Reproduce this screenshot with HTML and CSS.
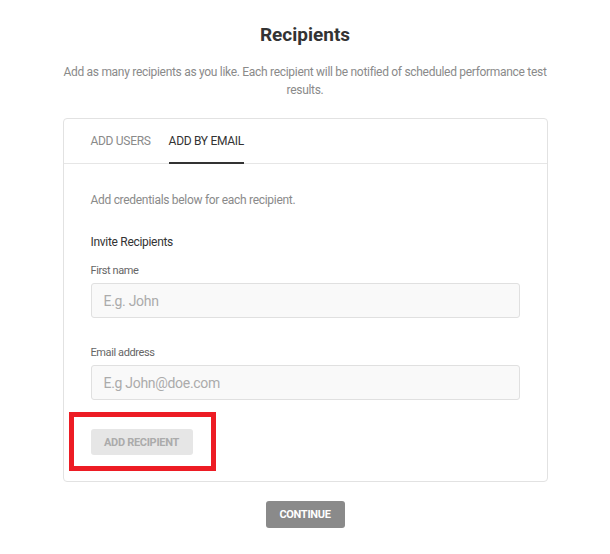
FILE: index.html
```html
<!DOCTYPE html>
<html>
<head>
<meta charset="utf-8">
<link rel="stylesheet" href="styles.css">
</head>
<body>
<div class="page">
  <h1 class="title">Recipients</h1>
  <p class="subtitle">Add as many recipients as you like. Each recipient will be notified of scheduled performance test results.</p>
  <div class="card">
    <div class="tabs">
      <div class="tab">ADD USERS</div>
      <div class="tab active">ADD BY EMAIL</div>
    </div>
    <div class="card-body">
      <p class="hint">Add credentials below for each recipient.</p>
      <h2 class="section">Invite Recipients</h2>
      <label class="label">First name</label>
      <input class="input" type="text" placeholder="E.g. John">
      <label class="label label-gap">Email address</label>
      <input class="input" type="text" placeholder="E.g John@doe.com">
      <div class="btn-wrap">
        <button class="btn-add">ADD RECIPIENT</button>
        <div class="highlight"></div>
      </div>
    </div>
  </div>
  <div class="actions">
    <button class="btn-continue">CONTINUE</button>
  </div>
</div>
</body>
</html>
```
FILE: styles.css
```css
* { box-sizing: border-box; }
html, body { margin: 0; padding: 0; background: #fff; }
body { font-family: Roboto, "Liberation Sans", Arial, sans-serif; color: #333; }
.page { width: 485px; margin: 0 auto; padding-top: 23px; }
.title { margin: 0; font-size: 19px; line-height: 24px; font-weight: 700; text-align: center; color: #333; }
.subtitle { margin: 16px -2px 0; font-size: 12px; line-height: 18px; color: #8a8a8a; text-align: center; letter-spacing: -0.3px; }
.card { margin-top: 19px; border: 1px solid #e2e2e2; border-radius: 4px; background: #fff; }
.tabs { display: flex; gap: 18px; padding: 0 27px; border-bottom: 1px solid #e6e6e6; height: 45px; }
.tab { font-size: 12px; line-height: 16px; padding-top: 14px; color: #8a8a8a; letter-spacing: -0.3px; }
.tab.active { color: #333; border-bottom: 2px solid #333; margin-bottom: -1px; }
.card-body { padding: 28px 27px 26px; display: flex; flex-direction: column; align-items: flex-start; }
.hint { margin: 0; font-size: 12px; line-height: 16px; color: #8a8a8a; letter-spacing: -0.3px; }
.section { margin: 26px 0 0; font-size: 12px; line-height: 16px; font-weight: 400; color: #333; letter-spacing: -0.3px; }
.label { display: block; margin-top: 14px; font-size: 11px; line-height: 14px; color: #666; letter-spacing: -0.4px; }
.label-gap { margin-top: 28px; }
.input { display: block; width: 100%; height: 35px; margin-top: 5px; padding: 0 12px; border: 1px solid #e0e0e0; border-radius: 3px; background: #f9f9f9; font-family: Roboto, "Liberation Sans", Arial, sans-serif; font-size: 14px; color: #333; outline: none; letter-spacing: -0.3px; }
.input::placeholder { color: #ababab; }
.btn-wrap { position: relative; margin-top: 29px; }
.btn-add { display: block; width: 102px; height: 26px; border: 0; border-radius: 3px; background: #e6e6e6; color: #ababab; font-family: Roboto, "Liberation Sans", Arial, sans-serif; font-size: 11px; font-weight: 700; letter-spacing: -0.3px; padding: 0; }
.highlight { position: absolute; top: -17px; left: -22px; width: 147px; height: 59px; border: 5px solid #ed1c24; }
.actions { display: flex; justify-content: center; margin-top: 19px; }
.btn-continue { width: 79px; height: 27px; border: 0; border-radius: 3px; background: #8a8a8a; color: #fff; font-family: Roboto, "Liberation Sans", Arial, sans-serif; font-size: 11px; font-weight: 700; letter-spacing: -0.3px; padding: 0; }
```
